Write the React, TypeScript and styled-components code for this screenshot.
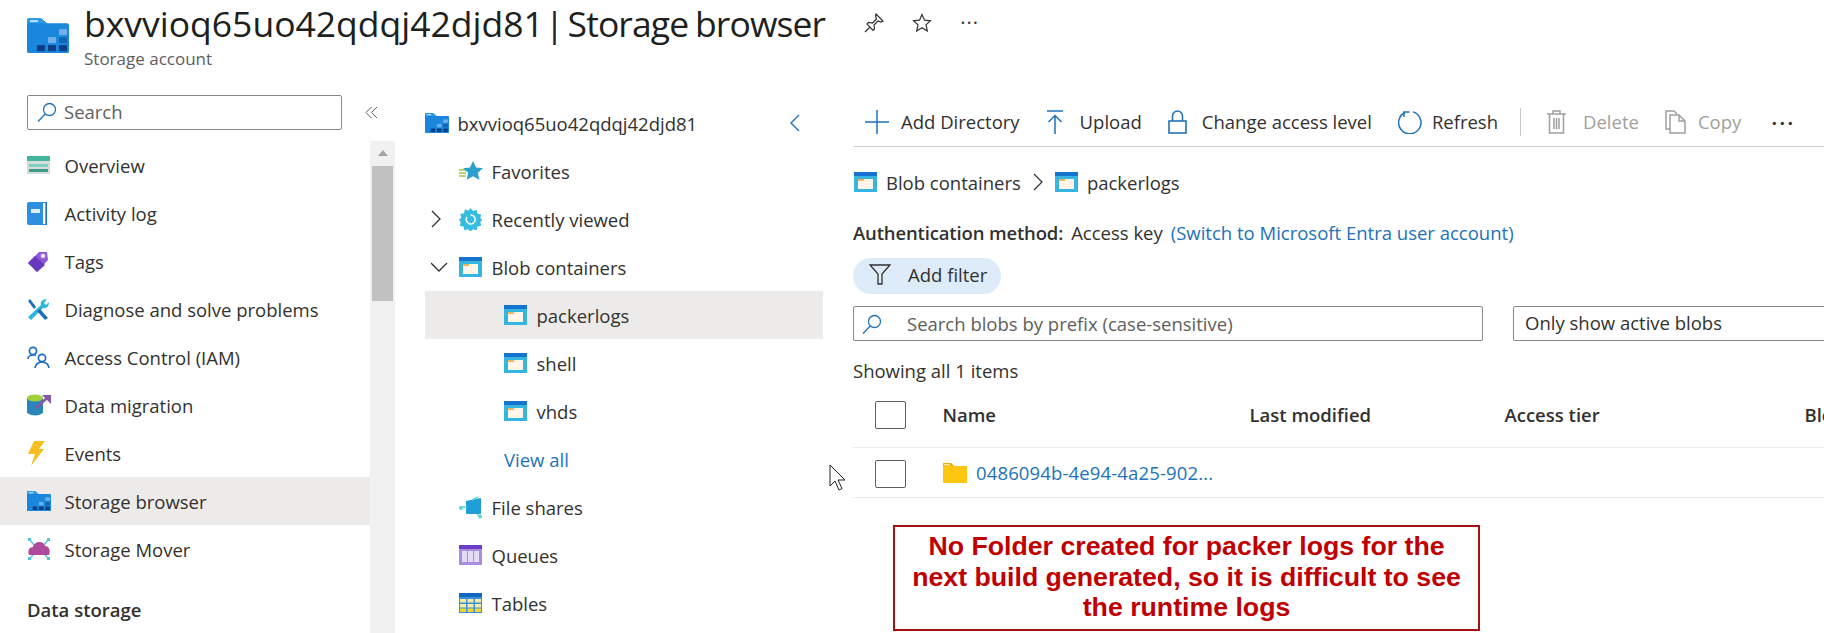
import React from 'react';
import styled, { createGlobalStyle } from 'styled-components';

const GlobalStyle = createGlobalStyle`
  html, body {
    margin: 0;
    padding: 0;
    background: #fff;
    overflow: hidden;
  }
  body {
    font-family: "Open Sans", "Noto Sans", sans-serif;
    font-size: 18.5px;
    color: #323130;
  }
  * { box-sizing: border-box; }
`;

type IconProps = { size?: number };

const StorageIcon = ({ size = 24 }: IconProps) => (
  <svg width={size} height={size * 0.84} viewBox="0 0 42 35">
    <path d="M0 2q0-2 2-2h12l6 5h20q2 0 2 2v26q0 2-2 2H2q-2 0-2-2z" fill="#1a86dc" />
    <path d="M0 2q0-2 2-2h12l6 5H0z" fill="#2b9be8" />
    <rect x="3" y="2" width="8" height="2" fill="#bfe3fa" />
    <rect x="32" y="11" width="8" height="6" fill="#6fb0ea" />
    <rect x="21" y="19" width="8" height="6" fill="#6fb0ea" />
    <rect x="32" y="19" width="8" height="6" fill="#0f66b5" />
    <rect x="10" y="27" width="8" height="6" fill="#0a3d86" />
    <rect x="21" y="27" width="8" height="6" fill="#0a3d86" />
    <rect x="32" y="27" width="8" height="6" fill="#0a3d86" />
  </svg>
);

const ContainerIcon = () => (
  <svg width="23" height="20" viewBox="0 0 23 20">
    <rect width="23" height="20" fill="#35b5e0" />
    <rect width="23" height="4" fill="#1674cf" />
    <rect x="4" y="7" width="15" height="10" fill="#fdf6e6" />
    <rect x="4" y="7" width="6" height="2" fill="#f0b35a" />
  </svg>
);

const OverviewIcon = () => (
  <svg width="23" height="18" viewBox="0 0 23 18">
    <rect width="23" height="18" fill="#d5dcda" />
    <rect width="23" height="5" fill="#43b59c" />
    <rect x="2" y="8" width="19" height="3" fill="#7fd0bc" />
    <rect x="2" y="13" width="19" height="3" fill="#3d9c88" />
  </svg>
);

const BookIcon = () => (
  <svg width="20" height="23" viewBox="0 0 20 23">
    <rect width="20" height="23" rx="2" fill="#2c8fdf" />
    <rect x="16" y="1" width="3" height="21" fill="#fff" />
    <rect x="18.4" width="1.6" height="23" fill="#1b6fb8" />
    <rect x="4" y="7" width="9" height="4" fill="#dceefb" />
  </svg>
);

const TagIcon = () => (
  <svg width="22" height="23" viewBox="0 0 22 23">
    <path d="M1 13 12 2h8l1 8-11 12z" fill="#8a5ad6" />
    <path d="M1 13 8 6l10 9-8 7z" fill="#6a38bc" />
    <circle cx="16" cy="6" r="2.4" fill="#fff" stroke="#c06ad0" />
  </svg>
);

const WrenchIcon = () => (
  <svg width="22" height="23" viewBox="0 0 22 23">
    <path d="M3 1l6 8-2 2-6-8z" fill="#1a6fb8" />
    <path d="M1 19 14 7c-1-3 1-6 6-6l-3 4 2 2 3-3c0 5-3 7-6 6L4 22z" fill="#2fb6dc" />
    <path d="M10 13l8 9 3-2-8-9z" fill="#1a6fb8" />
  </svg>
);

const PeopleIcon = () => (
  <svg width="24" height="23" viewBox="0 0 24 23" fill="none" stroke="#1c6cc4" strokeWidth="1.7">
    <circle cx="6" cy="5" r="3.6" />
    <path d="M1 13c0-3 3-4 5-4h3" />
    <circle cx="15" cy="12" r="3.6" />
    <path d="M8 22c0-3 3-6 7-6s7 3 7 6" />
  </svg>
);

const MigrationIcon = () => (
  <svg width="24" height="23" viewBox="0 0 24 23">
    <path d="M0 4h16v15q-8 5-16 0z" fill="#2a86b8" />
    <ellipse cx="8" cy="4" rx="8" ry="3.4" fill="#a3cf3e" />
    <path d="M9 14 20 4" stroke="#8a56a8" strokeWidth="2.6" />
    <path d="M15 1h9v9z" fill="#8a56a8" />
  </svg>
);

const BoltIcon = () => (
  <svg width="18" height="25" viewBox="0 0 18 25">
    <path d="M7 0h11l-6 8h5L4 25l4-12H1z" fill="#f8bd1e" />
  </svg>
);

const MoverIcon = () => (
  <svg width="24" height="24" viewBox="0 0 24 24">
    <path d="M3 3l4 5M21 3l-4 5M3 21l4-4M21 21l-4-4" stroke="#4fc6dc" strokeWidth="1.4" />
    <path d="M2 18c-2-5 1-8 4-8 1-6 11-7 12-1 4 0 6 5 4 9z" fill="#b04a9e" />
    <rect x="1" y="1" width="3" height="3" fill="#4fc6dc" />
    <rect x="20" y="1" width="3" height="3" fill="#4fc6dc" />
    <rect x="1" y="20" width="3" height="3" fill="#4fc6dc" />
    <rect x="20" y="20" width="3" height="3" fill="#4fc6dc" />
  </svg>
);

const FavoritesIcon = () => (
  <svg width="24" height="20" viewBox="0 0 24 20">
    <path d="M0 9h8M0 12h7M0 15h7" stroke="#a5c84a" strokeWidth="1.4" />
    <path d="M14 0l3 6.5 7 .7-5.2 4.6 1.6 7-6.4-3.6-6.4 3.6 1.6-7L4 7.2l7-.7z" fill="#2aa0cf" />
  </svg>
);

const RecentIcon = () => (
  <svg width="23" height="23" viewBox="0 0 23 23">
    <path d="M11.5 0l2.5 3 3.7-1 .8 3.7 3.7.8-1 3.7 2.3 1.3-2.3 2.5 1 3.7-3.7.8-.8 3.7-3.7-1-2.5 2.3-2.5-2.3-3.7 1-.8-3.7-3.7-.8 1-3.7L0 11.5l2.3-1.8-1-3.7 3.7-.8.8-3.7 3.7 1z" fill="#35bde0" />
    <path d="M8 9a4.5 4.5 0 1 0 3.5-2" fill="none" stroke="#fff" strokeWidth="1.5" />
  </svg>
);

const FileShareIcon = () => (
  <svg width="24" height="24" viewBox="0 0 24 24">
    <path d="M7 6 22 3v15q0 1-1 1H8q-1 0-1-1z" fill="#1f9fd8" />
    <path d="M0 12h8M13 5l6-3M18 19l3 3" stroke="#59d8cf" strokeWidth="1.4" />
    <circle cx="2" cy="13" r="2" fill="#59d8cf" />
    <circle cx="21" cy="21.5" r="2" fill="#59d8cf" />
  </svg>
);

const QueueIcon = () => (
  <svg width="23" height="20" viewBox="0 0 23 20">
    <rect width="23" height="20" fill="#a98ee0" />
    <rect width="23" height="4" fill="#6c3fc8" />
    <rect x="3" y="6" width="5" height="11" fill="#e4dbf6" />
    <rect x="9" y="6" width="5" height="11" fill="#e4dbf6" />
    <rect x="15" y="6" width="5" height="11" fill="#e4dbf6" />
  </svg>
);

const TableIcon = () => (
  <svg width="23" height="20" viewBox="0 0 23 20">
    <rect width="23" height="20" fill="#3a8fdc" />
    <rect width="23" height="4" fill="#1167c0" />
    {[1, 8.5, 16].map((x) =>
      [6, 11, 15.5].map((y) => (
        <rect key={`${x}-${y}`} x={x} y={y} width="6" height="3.5" fill={y === 15.5 ? '#f2d92e' : '#f6eda0'} />
      )),
    )}
  </svg>
);

const FolderIcon = () => (
  <svg width="24" height="20" viewBox="0 0 24 20">
    <path d="M0 1q0-1 1-1h7l3 3h13v17H0z" fill="#fdc60f" />
    <path d="M0 1q0-1 1-1h7l3 3H0z" fill="#e3ad15" />
    <rect x="1" y="1" width="6" height="1.5" fill="#f7e59a" />
  </svg>
);

const SearchGlyph = () => (
  <svg width="20" height="20" viewBox="0 0 20 20" fill="none" stroke="#2272b9" strokeWidth="1.3">
    <circle cx="12.5" cy="7.5" r="6" />
    <path d="M8.2 12 1 19.5" />
  </svg>
);

const PlusGlyph = () => (
  <svg width="24" height="24" viewBox="0 0 24 24" stroke="#2272b9" strokeWidth="1.5">
    <path d="M12 0v24M0 12h24" />
  </svg>
);

const UploadGlyph = () => (
  <svg width="18" height="24" viewBox="0 0 18 24" fill="none" stroke="#2272b9" strokeWidth="1.5">
    <path d="M1 1h16M9 24V6M2.5 12 9 5.5l6.5 6.5" />
  </svg>
);

const LockGlyph = () => (
  <svg width="19" height="24" viewBox="0 0 19 24" fill="none" stroke="#2272b9" strokeWidth="1.6">
    <rect x="1" y="11" width="17" height="12" />
    <path d="M4.5 11V6a5 5 0 0 1 10 0v5" />
  </svg>
);

const RefreshGlyph = () => (
  <svg width="24" height="25" viewBox="0 0 24 25" fill="none" stroke="#2272b9" strokeWidth="1.5">
    <path d="M7 3.5a11.2 11.2 0 1 0 8-.6" />
    <path d="M6 8V3h5.5" />
  </svg>
);

const TrashGlyph = () => (
  <svg width="19" height="24" viewBox="0 0 19 24" fill="none" stroke="#a19f9d" strokeWidth="1.5">
    <path d="M0 4h19M6 4V1h7v3M2.5 4v19h14V4M7 8v11M9.5 8v11M12 8v11" />
  </svg>
);

const CopyGlyph = () => (
  <svg width="21" height="24" viewBox="0 0 21 24" fill="none" stroke="#a19f9d" strokeWidth="1.5">
    <path d="M5 19H1V1h8l3 3" />
    <path d="M5 5h9l6 6v12H5zM14 5v6h6" />
  </svg>
);

const FunnelGlyph = () => (
  <svg width="22" height="21" viewBox="0 0 22 21" fill="none" stroke="#323130" strokeWidth="1.3">
    <path d="M1 1h20l-8 9v10H9V10z" />
  </svg>
);

const PinGlyph = () => (
  <svg width="20" height="20" viewBox="0 0 20 20" fill="none" stroke="#323130" strokeWidth="1.2">
    <path d="M12 1l7 7-2 1-3-1-4 4 .5 4-1.5 1.5L3 11l1.5-1.5 4 .5 4-4-1-3zM6 14l-5 5" />
  </svg>
);

const StarGlyph = () => (
  <svg width="20" height="20" viewBox="0 0 20 20" fill="none" stroke="#323130" strokeWidth="1.2">
    <path d="M10 1.5l2.5 5.7 6 .6-4.5 4.1 1.3 6.1-5.3-3.2-5.3 3.2L6 11.9 1.5 7.8l6-.6z" />
  </svg>
);

const DoubleChevron = () => (
  <svg width="13" height="13" viewBox="0 0 13 13" fill="none" stroke="#605e5c" strokeWidth="1">
    <path d="M6.5 1 1 6.5 6.5 12M12 1 6.5 6.5 12 12" />
  </svg>
);

const navItems = [
  { label: 'Overview', icon: <OverviewIcon /> },
  { label: 'Activity log', icon: <BookIcon /> },
  { label: 'Tags', icon: <TagIcon /> },
  { label: 'Diagnose and solve problems', icon: <WrenchIcon /> },
  { label: 'Access Control (IAM)', icon: <PeopleIcon /> },
  { label: 'Data migration', icon: <MigrationIcon /> },
  { label: 'Events', icon: <BoltIcon /> },
  { label: 'Storage browser', icon: <StorageIcon />, active: true },
  { label: 'Storage Mover', icon: <MoverIcon /> },
];

function App() {
  return (
    <Page>
      <GlobalStyle />
      <Header>
        <StorageIcon size={42} />
        <TitleBlock>
          <TitleRow>
            <Title>
              bxvvioq65uo42qdqj42djd81
              <TitleTail> | <TitlePage>Storage browser</TitlePage></TitleTail>
            </Title>
            <TitleActions>
              <PinGlyph />
              <StarGlyph />
              <SmallDots>···</SmallDots>
            </TitleActions>
          </TitleRow>
          <Subtitle>Storage account</Subtitle>
        </TitleBlock>
      </Header>
      <Body>
        <Sidebar>
          <SearchRow>
            <SideSearch>
              <SearchGlyph />
              <span>Search</span>
            </SideSearch>
            <Collapse><DoubleChevron /></Collapse>
          </SearchRow>
          <NavArea>
            <NavList>
              {navItems.map((item) => (
                <NavRow key={item.label} $active={item.active}>
                  <NavIcon>{item.icon}</NavIcon>
                  {item.label}
                </NavRow>
              ))}
              <SectionTitle>Data storage</SectionTitle>
            </NavList>
            <ScrollTrack>
              <ScrollArrow />
              <ScrollThumb />
            </ScrollTrack>
          </NavArea>
        </Sidebar>

        <Tree>
          <TreeRow>
            <TreeIcon><StorageIcon /></TreeIcon>
            <span>bxvvioq65uo42qdqj42djd81</span>
            <CollapseTree viewBox="0 0 11 18" fill="none" stroke="#2272b9" strokeWidth="1.4">
              <path d="M10 1 2 9l8 8" />
            </CollapseTree>
          </TreeRow>
          <TreeRow $indent={34}>
            <TreeIcon><FavoritesIcon /></TreeIcon>Favorites
          </TreeRow>
          <TreeRow $indent={6}>
            <Caret viewBox="0 0 28 18" fill="none" stroke="#323130" strokeWidth="1.3">
              <path d="M1 1l8 8-8 8" />
            </Caret>
            <TreeIcon><RecentIcon /></TreeIcon>Recently viewed
          </TreeRow>
          <TreeRow $indent={6}>
            <Caret viewBox="0 0 28 18" fill="none" stroke="#323130" strokeWidth="1.3">
              <path d="M0 5l8 8 8-8" />
            </Caret>
            <TreeIcon><ContainerIcon /></TreeIcon>Blob containers
          </TreeRow>
          <TreeRow $indent={79} $active>
            <TreeIcon><ContainerIcon /></TreeIcon>packerlogs
          </TreeRow>
          <TreeRow $indent={79}>
            <TreeIcon><ContainerIcon /></TreeIcon>shell
          </TreeRow>
          <TreeRow $indent={79}>
            <TreeIcon><ContainerIcon /></TreeIcon>vhds
          </TreeRow>
          <TreeRow $indent={79}>
            <LinkText>View all</LinkText>
          </TreeRow>
          <TreeRow $indent={34}>
            <TreeIcon><FileShareIcon /></TreeIcon>File shares
          </TreeRow>
          <TreeRow $indent={34}>
            <TreeIcon><QueueIcon /></TreeIcon>Queues
          </TreeRow>
          <TreeRow $indent={34}>
            <TreeIcon><TableIcon /></TreeIcon>Tables
          </TreeRow>
        </Tree>

        <Main>
          <Toolbar>
            <ToolButton $gap={12}><PlusGlyph />Add Directory</ToolButton>
            <ToolButton $gap={16}><UploadGlyph />Upload</ToolButton>
            <ToolButton $gap={15}><LockGlyph />Change access level</ToolButton>
            <ToolButton $gap={10}><RefreshGlyph />Refresh</ToolButton>
            <ToolDivider />
            <ToolButton $gap={17} $disabled><TrashGlyph />Delete</ToolButton>
            <ToolButton $gap={12} $disabled><CopyGlyph />Copy</ToolButton>
            <ToolDots>···</ToolDots>
          </Toolbar>

          <Crumbs>
            <ContainerIcon />
            <span>Blob containers</span>
            <svg width="10" height="18" viewBox="0 0 10 18" fill="none" stroke="#323130" strokeWidth="1.2">
              <path d="M1 1l8 8-8 8" />
            </svg>
            <ContainerIcon />
            <span>packerlogs</span>
          </Crumbs>

          <AuthLine>
            <strong>Authentication method:</strong>
            <span>Access key</span>
            <LinkText>(Switch to Microsoft Entra user account)</LinkText>
          </AuthLine>

          <FilterPill>
            <FunnelGlyph />
            Add filter
          </FilterPill>

          <SearchLine>
            <BlobSearch>
              <SearchGlyph />
              <span>Search blobs by prefix (case-sensitive)</span>
            </BlobSearch>
            <StatusSelect>Only show active blobs</StatusSelect>
          </SearchLine>

          <Showing>Showing all 1 items</Showing>

          <TableHead>
            <Checkbox />
            <HeadCell $width={307}>Name</HeadCell>
            <HeadCell $width={255}>Last modified</HeadCell>
            <HeadCell $width={300}>Access tier</HeadCell>
            <HeadCell $width={100}>Blob type</HeadCell>
          </TableHead>
          <TableRow>
            <Checkbox />
            <FolderIcon />
            <LinkText>0486094b-4e94-4a25-902...</LinkText>
          </TableRow>

          <Callout>
            No Folder created for packer logs for the next build generated, so it is difficult to see the runtime logs
          </Callout>
        </Main>
      </Body>
      <Pointer viewBox="0 0 18 27">
        <path d="M1 1v21l5-5 4 9 3-1.5-4-8.5h7z" fill="#fff" stroke="#222" strokeWidth="1" />
      </Pointer>
    </Page>
  );
}

const Page = styled.div`
  position: relative;
  width: 1824px;
  height: 633px;
  display: flex;
  flex-direction: column;
  overflow: hidden;
`;

const Header = styled.header`
  height: 95px;
  flex: none;
  display: flex;
  align-items: flex-start;
  gap: 15px;
  padding: 18px 0 0 27px;
`;

const TitleBlock = styled.div`
  margin-top: -19px;
`;

const TitleRow = styled.div`
  display: flex;
  align-items: center;
  height: 48px;
`;

const Title = styled.h1`
  margin: 0;
  font-size: 35.5px;
  font-weight: 400;
  color: #201f1e;
  white-space: nowrap;
`;

const TitleTail = styled.span`
  margin-left: -3.5px;
  letter-spacing: -0.9px;
  word-spacing: -4px;
`;

const TitlePage = styled.span`
  word-spacing: -1.5px;
`;

const TitleActions = styled.div`
  display: flex;
  align-items: center;
  gap: 28px;
  margin-left: 39px;
`;

const SmallDots = styled.span`
  font-size: 20px;
  line-height: 20px;
  letter-spacing: 1px;
`;

const Subtitle = styled.div`
  font-size: 17px;
  line-height: 23px;
  color: #605e5c;
`;

const Body = styled.div`
  flex: 1;
  display: flex;
  min-height: 0;
`;

const Sidebar = styled.aside`
  width: 395px;
  flex: none;
  display: flex;
  flex-direction: column;
`;

const SearchRow = styled.div`
  height: 46px;
  flex: none;
  display: flex;
  align-items: flex-start;
  padding-left: 27px;
`;

const SideSearch = styled.div`
  width: 315px;
  height: 35px;
  display: flex;
  align-items: center;
  gap: 7px;
  padding: 0 0 2px 9px;
  border: 1px solid #8a8886;
  border-radius: 2px;
  color: #605e5c;
`;

const Collapse = styled.span`
  margin: 11px 0 0 23px;
  display: flex;
`;

const NavArea = styled.div`
  flex: 1;
  display: flex;
  min-height: 0;
`;

const NavList = styled.nav`
  width: 370px;
`;

const NavRow = styled.div<{ $active?: boolean }>`
  height: 48px;
  display: flex;
  align-items: center;
  padding-left: 27px;
  background: ${(p) => (p.$active ? '#edebe9' : 'transparent')};
`;

const NavIcon = styled.span`
  width: 37.5px;
  flex: none;
  display: flex;
  align-items: center;
`;

const SectionTitle = styled.div`
  padding: 24px 0 0 27px;
  font-weight: 600;
`;

const ScrollTrack = styled.div`
  width: 25px;
  flex: none;
  background: #f1f1f1;
  display: flex;
  flex-direction: column;
  align-items: center;
`;

const ScrollArrow = styled.div`
  width: 0;
  height: 0;
  flex: none;
  margin: 9px 0 10px;
  border-left: 5px solid transparent;
  border-right: 5px solid transparent;
  border-bottom: 6px solid #a6a6a6;
`;

const ScrollThumb = styled.div`
  width: 21px;
  height: 135px;
  background: #c1c1c1;
`;

const Tree = styled.section`
  width: 398px;
  flex: none;
  margin-left: 30px;
  padding-top: 4px;
`;

const TreeRow = styled.div<{ $indent?: number; $active?: boolean }>`
  height: 48px;
  display: flex;
  align-items: center;
  padding-left: ${(p) => p.$indent ?? 0}px;
  background: ${(p) => (p.$active ? '#edebe9' : 'transparent')};
`;

const TreeIcon = styled.span`
  width: 33px;
  flex: none;
  display: flex;
  align-items: center;
  margin-right: -0.5px;
`;

const CollapseTree = styled.svg`
  width: 11px;
  height: 18px;
  margin-left: auto;
  margin-right: 23px;
`;

const Caret = styled.svg`
  width: 28px;
  height: 18px;
  flex: none;
`;

const LinkText = styled.span`
  color: #2272b9;
  white-space: nowrap;
`;

const Main = styled.main`
  flex: 1;
  min-width: 0;
  margin-left: 30px;
  padding-top: 5px;
  overflow: hidden;
`;

const Toolbar = styled.div`
  height: 47px;
  display: flex;
  align-items: center;
  gap: 26px;
  padding-left: 12px;
  padding-bottom: 3px;
  border-bottom: 1px solid #d2d0ce;
  white-space: nowrap;
`;

const ToolButton = styled.div<{ $gap: number; $disabled?: boolean }>`
  display: flex;
  align-items: center;
  gap: ${(p) => p.$gap}px;
  color: ${(p) => (p.$disabled ? '#a19f9d' : '#323130')};
`;

const ToolDivider = styled.div`
  width: 1px;
  height: 28px;
  margin-left: -4px;
  background: #c8c6c4;
`;

const ToolDots = styled.span`
  margin-left: 4px;
  font-size: 22px;
  font-weight: 600;
  letter-spacing: 2px;
  line-height: 20px;
`;

const Crumbs = styled.div`
  height: 72px;
  display: flex;
  align-items: center;
  gap: 9px;
  padding: 0 0 2px 1px;
  svg:nth-of-type(2) {
    margin: 0 3px;
  }
`;

const AuthLine = styled.div`
  height: 26px;
  display: flex;
  align-items: center;
  gap: 8px;
  strong {
    font-weight: 600;
    letter-spacing: -0.15px;
  }
`;

const FilterPill = styled.div`
  width: 148px;
  height: 36px;
  margin-top: 13px;
  display: flex;
  align-items: center;
  gap: 17px;
  padding: 0 0 3px 16px;
  border-radius: 18px;
  background: #deecf9;
`;

const SearchLine = styled.div`
  display: flex;
  gap: 30px;
  margin-top: 12px;
`;

const BlobSearch = styled.div`
  width: 630px;
  height: 35px;
  flex: none;
  display: flex;
  align-items: center;
  gap: 25px;
  padding-left: 8px;
  border: 1px solid #8a8886;
  border-radius: 2px;
  color: #605e5c;
`;

const StatusSelect = styled.div`
  width: 400px;
  height: 35px;
  flex: none;
  display: flex;
  align-items: center;
  padding: 0 0 2px 11px;
  border: 1px solid #8a8886;
  border-radius: 2px;
`;

const Showing = styled.div`
  height: 60px;
  display: flex;
  align-items: center;
  padding-bottom: 2px;
`;

const TableHead = styled.div`
  height: 47px;
  display: flex;
  align-items: center;
  padding: 0 0 19px 22px;
  border-bottom: 1px solid #edebe9;
  white-space: nowrap;
`;

const HeadCell = styled.div<{ $width: number }>`
  width: ${(p) => p.$width}px;
  flex: none;
  font-weight: 600;
`;

const Checkbox = styled.span`
  width: 31px;
  height: 28px;
  flex: none;
  margin-right: 36.5px;
  border: 1px solid #605e5c;
  border-radius: 2px;
`;

const TableRow = styled.div`
  height: 50px;
  display: flex;
  align-items: center;
  gap: 9px;
  padding: 2px 0 0 22px;
  border-bottom: 1px solid #edebe9;
  ${Checkbox} {
    margin-right: 28px;
  }
  svg {
    margin-top: -2px;
  }
  ${LinkText} {
    margin-top: -2px;
    letter-spacing: 0.14px;
  }
`;

const Callout = styled.div`
  width: 587px;
  height: 106px;
  margin: 27px 0 0 40px;
  padding: 4px 10px 0;
  border: 2px solid #a80d14;
  font-family: "Liberation Sans", Arial, sans-serif;
  font-size: 26.7px;
  font-weight: 700;
  line-height: 30.5px;
  color: #c00000;
  text-align: center;
`;

const Pointer = styled.svg`
  position: absolute;
  left: 829px;
  top: 464px;
  width: 18px;
  height: 27px;
`;

export default App;
